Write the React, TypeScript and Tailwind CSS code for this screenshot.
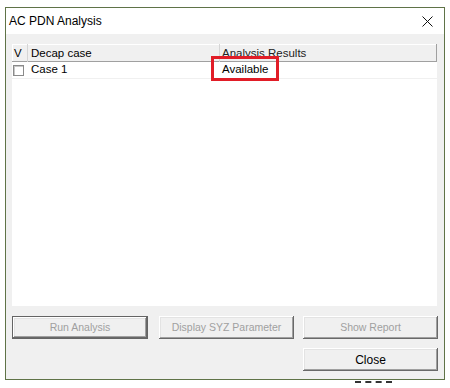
const btnBase =
  "flex h-[23px] items-center justify-center bg-[#f0f0f0] shadow-[inset_-1px_-1px_#696969,inset_1px_1px_#ffffff,inset_-2px_-2px_#a0a0a0,inset_2px_2px_#e3e3e3]";

export default function App() {
  return (
    <div className="h-[388px] w-[450px] overflow-hidden bg-white font-['Liberation_Sans',Arial,sans-serif]">
      <div className="ml-[5px] mt-[7px] flex h-[373px] w-[440px] flex-col border border-[#5f7347] bg-[#f0f0f0]">
        {/* title bar */}
        <div className="flex h-[26px] shrink-0 items-center justify-between bg-white pl-[3px] pr-[11px]">
          <span className="text-[12px] text-black">AC PDN Analysis</span>
          <svg width="11" height="11" viewBox="0 0 11 11" className="mt-[1px]">
            <path d="M0.5 0.5 L10.5 10.5 M10.5 0.5 L0.5 10.5" stroke="#111" strokeWidth="1" />
          </svg>
        </div>

        {/* list */}
        <div className="ml-[6px] mt-[10px] flex h-[262px] w-[425px] flex-col bg-white">
          <div className="flex h-[18px] shrink-0 bg-[#f0f0f0] text-[11.5px] leading-[18px] text-black shadow-[inset_-1px_-1px_#a0a0a0,inset_1px_1px_#ffffff]">
            <div className="w-[16px] border-r border-[#d5d5d5] pl-[2px]">V</div>
            <div className="w-[192px] border-r border-[#d5d5d5] pl-[3px]">Decap case</div>
            <div className="pl-[2px] text-[#222]">Analysis Results</div>
          </div>
          <div className="relative flex h-[17px] items-center border-b border-[#f0f0f0] text-[11.5px] text-black">
            <div className="flex w-[16px] justify-start pl-[1px]">
              <span className="h-[11px] w-[11px] border border-[#8a8a8a] bg-white shadow-[inset_1px_1px_#c8c8c8]" />
            </div>
            <div className="w-[192px] pl-[3px]">Case 1</div>
            <div className="pl-[2px]">Available</div>
            <div className="pointer-events-none absolute left-[199px] top-[-6px] h-[25px] w-[68px] border-[3px] border-[#e11d27]" />
          </div>
        </div>

        {/* buttons */}
        <div className="ml-[6px] mt-[10px] flex text-[10.5px] text-[#a0a0a0]">
          <div className={`${btnBase} w-[136px] border border-[#646464]`}>Run Analysis</div>
          <div className={`${btnBase} ml-[11px] w-[135px]`}>Display SYZ Parameter</div>
          <div className={`${btnBase} ml-[9px] w-[135px]`}>Show Report</div>
        </div>
        <div className="ml-[297px] mt-[9px] flex">
          <div className={`${btnBase} w-[135px] text-[12px] text-black`}>Close</div>
        </div>
      </div>
      <div className="ml-[355px] mt-[1px] h-[2px] w-[37px] border-t-2 border-dashed border-[#333]" />
    </div>
  );
}
